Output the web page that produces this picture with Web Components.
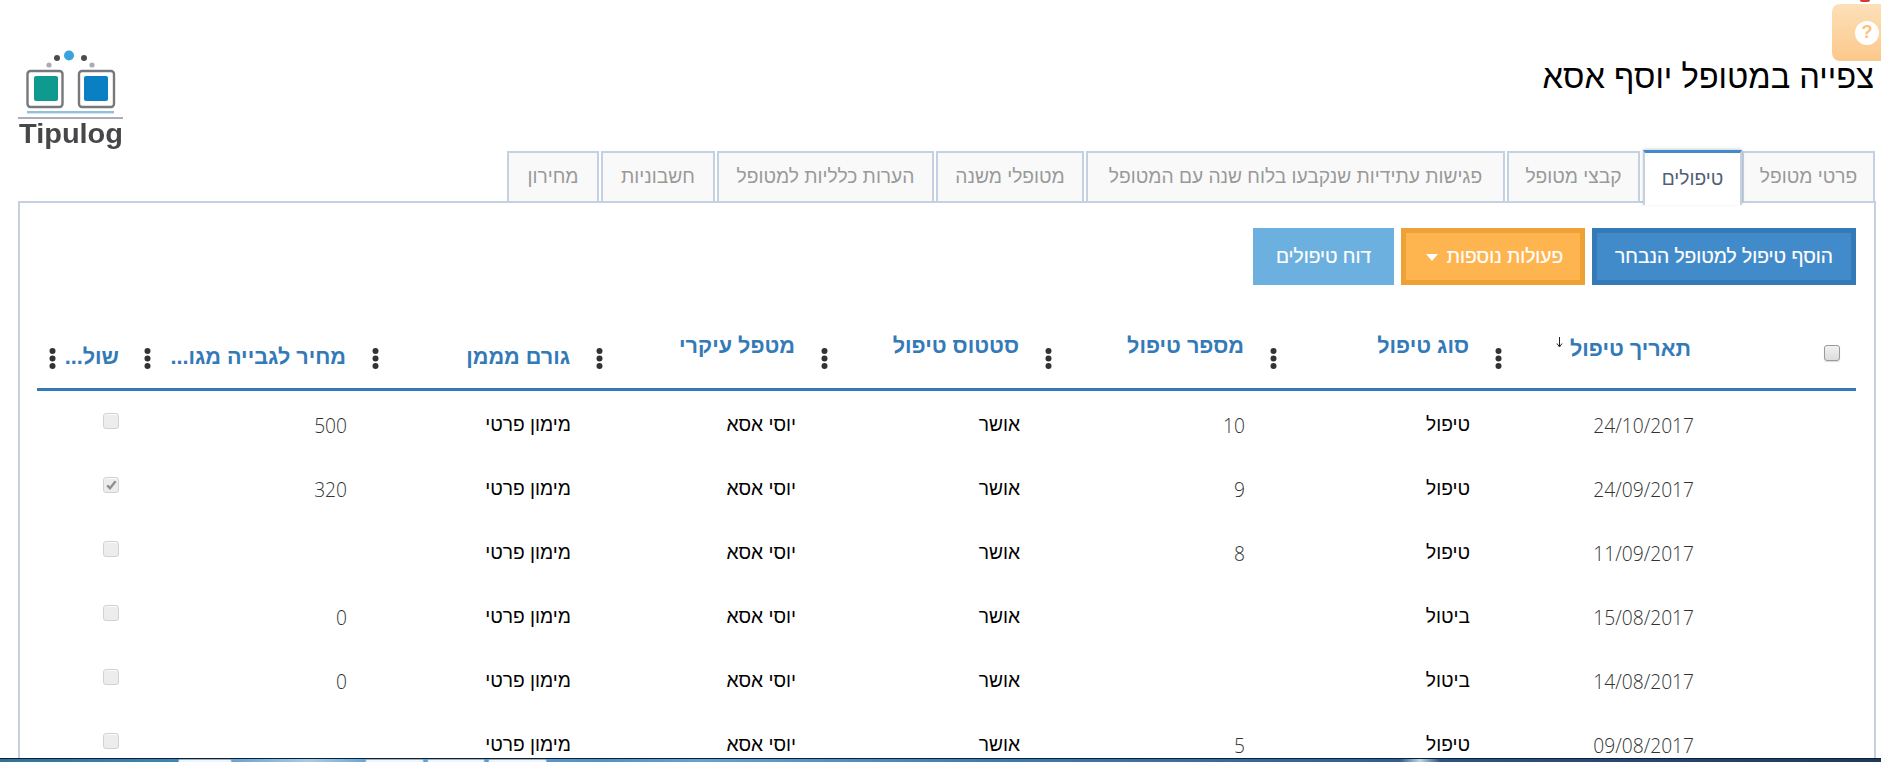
<!DOCTYPE html>
<html lang="he" dir="rtl">
<head>
<meta charset="utf-8">
<title>Tipulog</title>
<style>
html,body{margin:0;height:100%;overflow:hidden;background:#fff}
body{font-family:"Liberation Sans",Arial,sans-serif;color:#000;
--cols:156px 224px 225px 225px 224px 225px 224px 228px 88px}
</style>
</head>
<body>
<app-shell>
  <page-header title-text="צפייה במטופל יוסף אסא"></page-header>
  <tab-strip>
    <tab-item w="133">פרטי מטופל</tab-item>
    <tab-item w="99" active>טיפולים</tab-item>
    <tab-item w="133">קבצי מטופל</tab-item>
    <tab-item w="419">פגישות עתידיות שנקבעו בלוח שנה עם המטופל</tab-item>
    <tab-item w="148">מטופלי משנה</tab-item>
    <tab-item w="217">הערות כלליות למטופל</tab-item>
    <tab-item w="114">חשבוניות</tab-item>
    <tab-item w="92">מחירון</tab-item>
  </tab-strip>
  <tab-panel>
    <action-bar>
      <action-btn kind="primary" w="264">הוסף טיפול למטופל הנבחר</action-btn>
      <action-btn kind="warning" w="184" caret>פעולות נוספות</action-btn>
      <action-btn kind="info" w="141">דוח טיפולים</action-btn>
    </action-bar>
    <table-head>
      <head-cell plain><check-box strong></check-box></head-cell>
      <head-cell sorted pad="3">תאריך טיפול</head-cell>
      <head-cell pad="0">סוג טיפול</head-cell>
      <head-cell pad="0">מספר טיפול</head-cell>
      <head-cell pad="0">סטטוס טיפול</head-cell>
      <head-cell pad="0">מטפל עיקרי</head-cell>
      <head-cell pad="11">גורם מממן</head-cell>
      <head-cell pad="11">מחיר לגבייה מגו...</head-cell>
      <head-cell pad="11" end>שול...</head-cell>
    </table-head>
    <table-body>
      <table-row><table-cell></table-cell><table-cell num>24/10/2017</table-cell><table-cell>טיפול</table-cell><table-cell num>10</table-cell><table-cell>אושר</table-cell><table-cell>יוסי אסא</table-cell><table-cell>מימון פרטי</table-cell><table-cell num>500</table-cell><table-cell box><check-box></check-box></table-cell></table-row>
      <table-row><table-cell></table-cell><table-cell num>24/09/2017</table-cell><table-cell>טיפול</table-cell><table-cell num>9</table-cell><table-cell>אושר</table-cell><table-cell>יוסי אסא</table-cell><table-cell>מימון פרטי</table-cell><table-cell num>320</table-cell><table-cell box><check-box checked></check-box></table-cell></table-row>
      <table-row><table-cell></table-cell><table-cell num>11/09/2017</table-cell><table-cell>טיפול</table-cell><table-cell num>8</table-cell><table-cell>אושר</table-cell><table-cell>יוסי אסא</table-cell><table-cell>מימון פרטי</table-cell><table-cell num></table-cell><table-cell box><check-box></check-box></table-cell></table-row>
      <table-row><table-cell></table-cell><table-cell num>15/08/2017</table-cell><table-cell>ביטול</table-cell><table-cell num></table-cell><table-cell>אושר</table-cell><table-cell>יוסי אסא</table-cell><table-cell>מימון פרטי</table-cell><table-cell num>0</table-cell><table-cell box><check-box></check-box></table-cell></table-row>
      <table-row><table-cell></table-cell><table-cell num>14/08/2017</table-cell><table-cell>ביטול</table-cell><table-cell num></table-cell><table-cell>אושר</table-cell><table-cell>יוסי אסא</table-cell><table-cell>מימון פרטי</table-cell><table-cell num>0</table-cell><table-cell box><check-box></check-box></table-cell></table-row>
      <table-row><table-cell></table-cell><table-cell num>09/08/2017</table-cell><table-cell>טיפול</table-cell><table-cell num>5</table-cell><table-cell>אושר</table-cell><table-cell>יוסי אסא</table-cell><table-cell>מימון פרטי</table-cell><table-cell num></table-cell><table-cell box><check-box></check-box></table-cell></table-row>
    </table-body>
  </tab-panel>
  <task-bar></task-bar>
</app-shell>
<script>
function def(name, css, html, init){
  customElements.define(name, class extends HTMLElement{
    connectedCallback(){
      if(this.shadowRoot) return;
      const r=this.attachShadow({mode:'open'});
      r.innerHTML='<style>'+css+'</style>'+(typeof html==='function'?html(this):html);
      if(init) init(this,r);
    }
  });
}
def('app-shell',`
  :host{display:flex;flex-direction:column;height:100vh;overflow:hidden;position:relative}
`,`<slot></slot>`);
def('logo-mark',`
  :host{display:block;width:106px;height:99px;margin-top:50px}
  svg{display:block;filter:blur(.45px)}
`,`<svg width="106" height="99" viewBox="18 50 106 99" aria-label="Tipulog">
  <circle cx="69" cy="55.5" r="5" fill="#3aa2dc"/>
  <circle cx="57" cy="58" r="3" fill="#4b4b52"/><circle cx="84" cy="58" r="3" fill="#4b4b52"/>
  <circle cx="49" cy="65" r="2.6" fill="#a9aeb3"/><circle cx="92" cy="65" r="2.6" fill="#a9aeb3"/>
  <rect x="27.5" y="71" width="35" height="36" rx="3" fill="#fff" stroke="#77787c" stroke-width="2.4"/>
  <rect x="79" y="71" width="35" height="36" rx="3" fill="#fff" stroke="#77787c" stroke-width="2.4"/>
  <rect x="34" y="76" width="24" height="25" rx="2" fill="#0f9a90"/>
  <rect x="84" y="76" width="24" height="25" rx="2" fill="#0b7fc3"/>
  <rect x="27" y="111" width="87" height="2.4" fill="#8fc3dc"/>
  <rect x="18" y="117" width="105" height="2" fill="#aeacb6"/>
  <text x="19" y="143" font-family="Liberation Sans" font-weight="700" font-size="28" fill="#474749" textLength="104" lengthAdjust="spacingAndGlyphs" style="direction:ltr">Tipulog</text>
</svg>`);
def('help-tab',`
  :host{position:absolute;top:4px;right:0;width:49px;height:57px;border-radius:8px 0 0 8px;
    background:linear-gradient(#fde0b9,#fcc88a);display:flex;align-items:center;padding-right:2px;box-sizing:border-box}
  i{display:flex;align-items:center;justify-content:center;width:24px;height:24px;border-radius:50%;background:#fff;color:#fbc27c;
    font:700 18px "Liberation Sans",sans-serif}
  b{position:absolute;top:-4px;right:11px;width:10px;height:2px;border-radius:0 0 6px 6px;background:#d43a3a}
`,`<b></b><i>?</i>`);
def('page-header',`
  :host{display:flex;justify-content:space-between;align-items:flex-start;height:150px;padding:0 7px 0 0}
  h1{margin:58px 0 0;font-weight:400;font-size:32.64px;line-height:38px;color:#000}
`,t=>`<h1>${t.getAttribute('title-text')}</h1><logo-mark style="margin-left:18px"></logo-mark><help-tab></help-tab>`);
def('tab-strip',`
  :host{display:flex;gap:2px;align-items:flex-end;height:53px;padding-right:6px;position:relative;z-index:1}
`,`<slot></slot>`);
def('tab-item',`
  :host{display:flex;box-sizing:border-box;height:52px;align-items:center;justify-content:center;white-space:nowrap;flex:none;
    font-size:19.2px;color:#999;background:#f9f9f9;border:2px solid #c5d1e1}
  :host([active]){height:55px;margin-bottom:-2px;margin-right:-2px;margin-left:1px;background:#fff;color:#4f5f75;border-top:3px solid #428bca;border-bottom:0;
    box-shadow:0 -1px 3px rgba(0,0,0,.18)}
`,`<slot></slot>`,t=>{t.style.width=t.getAttribute('w')+'px'});
def('tab-panel',`
  :host{display:block;flex:1;min-height:0;margin:-2px 5px 0 18px;box-sizing:border-box;border:2px solid #c5d1e1;border-bottom:0;
    padding:25px 18px 0 17px;overflow:hidden}
`,`<slot></slot>`);
def('action-bar',`:host{display:flex;gap:7px;height:57px}`,`<slot></slot>`);
def('action-btn',`
  :host{display:flex;align-items:center;justify-content:center;gap:9px;box-sizing:border-box;height:57px;border:5px solid;
    font-size:19.2px;color:#fff;-webkit-text-stroke:.2px #fff;white-space:nowrap}
  :host([kind=primary]){background:#428bca;border-color:#337ab7}
  :host([kind=warning]){background:#ffb54f;border-color:#eea236;padding-left:3px}
  :host([kind=info]){background:#6cb0e0;border-color:#6cb0e0}
  i{width:0;height:0;border-left:6.5px solid transparent;border-right:6.5px solid transparent;border-top:7px solid #fff;margin-top:1px}
`,t=>`<slot></slot>${t.hasAttribute('caret')?'<i></i>':''}`,t=>{t.style.width=t.getAttribute('w')+'px'});
def('table-head',`
  :host{display:grid;grid-template-columns:var(--cols);margin-top:48px;height:55px;border-bottom:3px solid #337ab7}
`,`<slot></slot>`);
def('head-cell',`
  :host{display:flex;justify-content:space-between;align-items:flex-start;padding:0 7px 0 19px;min-width:0;white-space:nowrap;
    font-weight:700;font-size:21.6px;color:#337ab7}
  :host([plain]){justify-content:flex-start;padding:12px 16px 0 0}
  :host([sorted]){padding-right:9px}
  :host([end]){padding-left:12px;padding-right:6px}
  .l{display:flex;align-items:flex-start;gap:7px;line-height:26px}
  .l svg{margin-top:1px}
  .d{display:block;margin-top:15px;flex:none}
`,t=>{
  if(t.hasAttribute('plain')) return '<slot></slot>';
  const arrow=t.hasAttribute('sorted')?'<svg width="7" height="11" viewBox="0 0 7 11"><path d="M3.5 0v9M1 6.5l2.5 3.5L6 6.5" fill="none" stroke="#222" stroke-width="1"/></svg>':'';
  return `<span class="l" style="padding-top:${t.getAttribute('pad')}px"><slot></slot>${arrow}</span>
  <svg class="d" width="7" height="21" viewBox="0 0 7 21"><circle cx="3.5" cy="3" r="3" fill="#333"/><circle cx="3.5" cy="10.5" r="3" fill="#333"/><circle cx="3.5" cy="18" r="3" fill="#333"/></svg>`;
});
def('table-body',`:host{display:block;padding-top:2px}`,`<slot></slot>`);
def('table-row',`:host{display:grid;grid-template-columns:var(--cols);height:64px;align-items:center}`,`<slot></slot>`);
def('table-cell',`
  :host{display:block;padding-right:6px;font-size:19.2px;color:#000;white-space:nowrap;min-width:0}
  :host([num]){font:300 19.2px "Open Sans",sans-serif;color:#333}
  :host([box]){margin-top:-8px;line-height:0}
`,`<slot></slot>`);
def('check-box',`
  :host{display:inline-flex;align-items:center;justify-content:center;box-sizing:border-box;width:16px;height:16px;border-radius:3px;
    background:#ececec;border:1px solid #d2d2d2;box-shadow:inset 0 1px 1px rgba(255,255,255,.8)}
  :host([strong]){background:linear-gradient(#f2f2f2,#dcdcdc);border-color:#9a9a9a;box-shadow:0 1px 1px rgba(0,0,0,.15)}
`,t=>t.hasAttribute('checked')?'<svg width="11" height="10" viewBox="0 0 11 10"><path d="M1.2 5.3 4 8.2 9.6 1.3" fill="none" stroke="#8f8f8f" stroke-width="2.4"/></svg>':'');
def('task-bar',`
  :host{display:flex;height:4px;flex:none;overflow:hidden;box-sizing:border-box;border-top:1px solid #12202e;direction:ltr;
    background:linear-gradient(90deg,#2f7198 0,#3d86b8 178px,#6aa6d6 237px,#a8cbe8 310px,#6aa6d6 365px,#4f93c9 600px,#64a2d6 700px,#3d7ab0 1000px,#2f5f94 1400px,#c0d8e8 1420px,#2d5487 1440px,#26497a 1600px,#1d3a5c 1881px)}
  i{display:block;height:5px;background:#f2f6fa;border:1px solid #8fb4d0;border-radius:2px 2px 0 0;box-sizing:border-box}
`,`<i style="margin-left:178px;width:54px"></i><i style="margin-left:133px;width:59px"></i><i style="margin-left:3px;width:58px"></i><i style="margin-left:3px;width:59px"></i>`);
</script>
</body>
</html>
